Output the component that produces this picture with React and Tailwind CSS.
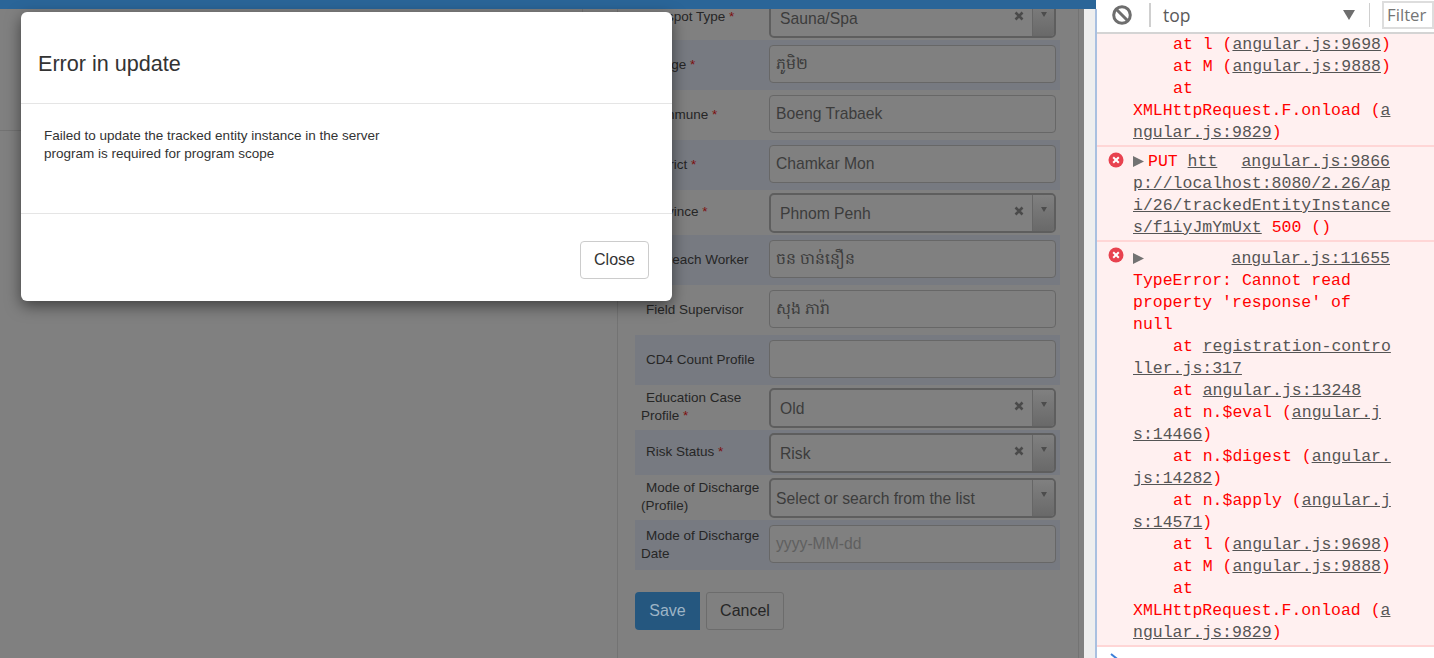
const rows = [
  { label: "Hotspot Type", req: true, h: "h-[45px]", type: "select", value: "Sauna/Spa" },
  { label: "Village", req: true, h: "h-[50px]", dark: true, value: "ភូមិ២" },
  { label: "Commune", req: true, h: "h-[50px]", value: "Boeng Trabaek" },
  { label: "District", req: true, h: "h-[50px]", dark: true, value: "Chamkar Mon" },
  { label: "Province", req: true, h: "h-[45px]", type: "select", value: "Phnom Penh" },
  { label: "Outreach Worker", h: "h-[50px]", dark: true, value: "ចន ចាន់នឿន" },
  { label: "Field Supervisor", h: "h-[50px]", value: "សុង ភារ៉ា" },
  { label: "CD4 Count Profile", h: "h-[50px]", dark: true, value: "" },
  { label: "Education Case Profile", req: true, h: "h-[45px]", type: "select", value: "Old" },
  { label: "Risk Status", req: true, h: "h-[45px]", dark: true, type: "select", value: "Risk" },
  { label: "Mode of Discharge (Profile)", h: "h-[45px]", type: "empty", value: "Select or search from the list" },
  { label: "Mode of Discharge Date", h: "h-[50px]", dark: true, placeholder: "yyyy-MM-dd" },
];

function SelectBox({ value, empty }) {
  return (
    <div className="flex h-[40px] w-[287px] overflow-hidden rounded-[5px] border-[2px] border-[#5e5e5e] bg-[#808080] text-[15.7px] text-[#3c3c3c]">
      <span className={empty ? "flex-1 pl-[5px] pt-[8px] leading-[22px]" : "flex-1 pl-[9px] pt-[8px] leading-[22px]"}>{value}</span>
      {!empty && (
        <svg className="mr-[8px] mt-[11px]" width="10" height="10" viewBox="0 0 10 10">
          <path d="M1.5 1.5l7 7M8.5 1.5l-7 7" stroke="#4a4a4a" strokeWidth="2.6" />
        </svg>
      )}
      <span className="flex w-[22px] justify-center border-l border-[#666666] bg-gradient-to-b from-[#808080] to-[#696969] pt-[11px]">
        <svg width="8" height="7" viewBox="0 0 8 7">
          <polygon points="1,1 7,1 4,6" fill="#4d4d4d" />
        </svg>
      </span>
    </div>
  );
}

function FormRow({ row }) {
  const isSelect = row.type === "select" || row.type === "empty";
  return (
    <div className={`flex items-center ${row.h} ${row.dark ? "bg-[#777a81]" : ""}`}>
      <div className={`w-[134px] pl-[6px] text-[13.5px] leading-[18px] text-[#262626] indent-[5px] ${isSelect ? "mb-[2px]" : ""}`}>
        {row.label}
        {row.req && <span className="text-[#7d0f0f]"> *</span>}
      </div>
      {row.type === "select" && <SelectBox value={row.value} />}
      {row.type === "empty" && <SelectBox value={row.value} empty />}
      {!row.type && (
        <div className="mb-[2px] flex h-[38px] w-[287px] items-center rounded-[4px] border border-[#676767] bg-[#808080] px-[6px] text-[15.7px] text-[#3c3c3c]">
          {row.placeholder ? <span className="text-[#5f5f5f]">{row.placeholder}</span> : row.value}
        </div>
      )}
    </div>
  );
}

function Link({ children }) {
  return <span className="text-[#555555] underline">{children}</span>;
}

function Line({ indent, children }) {
  return (
    <div className={`h-[22px] whitespace-pre ${indent ? "pl-[40px]" : ""}`}>{children}</div>
  );
}

function ErrorIcon() {
  return (
    <svg className="absolute left-[11px] top-[5px]" width="16" height="16" viewBox="0 0 16 16">
      <circle cx="8" cy="8" r="7.5" fill="#e8424f" />
      <path d="M5.2 5.2l5.6 5.6M10.8 5.2l-5.6 5.6" stroke="#ffffff" strokeWidth="2" />
    </svg>
  );
}

function Arrow() {
  return (
    <svg className="mb-[-1px] mr-[4px] inline-block align-baseline" width="11" height="11" viewBox="0 0 11 11">
      <polygon points="0,0 11,5.5 0,11" fill="#727272" />
    </svg>
  );
}

function Console() {
  return (
    <div className="flex w-[337px] flex-col bg-white">
      <div className="flex h-[34px] items-center border-b-[2px] border-[#d4d4d4] pb-[2px] font-['Open_Sans',sans-serif]">
        <svg className="ml-[15px]" width="20" height="20" viewBox="0 0 20 20">
          <circle cx="10" cy="10" r="8.3" fill="none" stroke="#6e6e6e" strokeWidth="3" />
          <path d="M4 4l12 12" stroke="#6e6e6e" strokeWidth="3" />
        </svg>
        <div className="ml-[17px] h-[24px] w-[2px] bg-[#cfcfcf]" />
        <span className="ml-[12px] flex-1 text-[17.5px] text-[#5a5a5a]">top</span>
        <svg width="12" height="10" viewBox="0 0 12 10">
          <polygon points="0,0 12,0 6,10" fill="#6e6e6e" />
        </svg>
        <div className="ml-[14px] h-[24px] w-px bg-[#cfcfcf]" />
        <div className="ml-[12px] flex h-[28px] w-[52px] items-center border-[2px] border-[#dddddd] pl-[3px] text-[16.8px] text-[#757575]">
          Filter
        </div>
      </div>
      <div className="flex flex-1 flex-col overflow-hidden font-['Liberation_Mono',monospace] text-[16.5px] leading-[22px] text-[#ff0000]">
        <div className="border-b-[2px] border-[#ffd6d6] bg-[#fff0f0] pb-[1px] pl-[36px]">
          <Line indent>at l (<Link>angular.js:9698</Link>)</Line>
          <Line indent>at M (<Link>angular.js:9888</Link>)</Line>
          <Line indent>at</Line>
          <Line>XMLHttpRequest.F.onload (<Link>a</Link></Line>
          <Line><Link>ngular.js:9829</Link>)</Line>
        </div>
        <div className="relative border-b-[2px] border-[#ffd6d6] bg-[#fff0f0] pb-[1px] pl-[36px] pt-[4px]">
          <ErrorIcon />
          <div className="flex h-[22px] pr-[44px]">
            <span className="flex-1 whitespace-pre"><Arrow />PUT <Link>htt</Link></span>
            <Link>angular.js:9866</Link>
          </div>
          <Line><Link>p://localhost:8080/2.26/ap</Link></Line>
          <Line><Link>i/26/trackedEntityInstance</Link></Line>
          <Line><Link>s/f1iyJmYmUxt</Link> 500 ()</Line>
        </div>
        <div className="relative border-b-[2px] border-[#ffd6d6] bg-[#fff0f0] pb-[1px] pl-[36px] pt-[6px]">
          <ErrorIcon />
          <div className="flex h-[22px] pr-[44px]">
            <span className="flex-1"><Arrow /></span>
            <Link>angular.js:11655</Link>
          </div>
          <Line>TypeError: Cannot read</Line>
          <Line>property 'response' of</Line>
          <Line>null</Line>
          <Line indent>at <Link>registration-contro</Link></Line>
          <Line><Link>ller.js:317</Link></Line>
          <Line indent>at <Link>angular.js:13248</Link></Line>
          <Line indent>at n.$eval (<Link>angular.j</Link></Line>
          <Line><Link>s:14466</Link>)</Line>
          <Line indent>at n.$digest (<Link>angular.</Link></Line>
          <Line><Link>js:14282</Link>)</Line>
          <Line indent>at n.$apply (<Link>angular.j</Link></Line>
          <Line><Link>s:14571</Link>)</Line>
          <Line indent>at l (<Link>angular.js:9698</Link>)</Line>
          <Line indent>at M (<Link>angular.js:9888</Link>)</Line>
          <Line indent>at</Line>
          <Line>XMLHttpRequest.F.onload (<Link>a</Link></Line>
          <Line><Link>ngular.js:9829</Link>)</Line>
        </div>
        <div className="pl-[11px] pt-[5px]">
          <svg width="12" height="12" viewBox="0 0 12 12">
            <path d="M3 2l5 4-5 4" fill="none" stroke="#3b7fd9" strokeWidth="2" />
          </svg>
        </div>
      </div>
    </div>
  );
}

function Modal() {
  return (
    <div className="absolute left-[21px] top-[12px] flex h-[289px] w-[651px] flex-col rounded-[6px] bg-white text-[#333333] shadow-[0_5px_15px_rgba(0,0,0,0.5)]">
      <div className="flex h-[92px] items-center border-b border-[#e5e5e5] pl-[17px] pt-[13px] text-[21.6px]">
        Error in update
      </div>
      <div className="h-[110px] border-b border-[#e5e5e5] pl-[23px] pt-[23px] text-[13.5px] leading-[18px]">
        <div>Failed to update the tracked entity instance in the server</div>
        <div>program is required for program scope</div>
      </div>
      <div className="flex justify-end pr-[23px] pt-[27px]">
        <button className="h-[38px] w-[69px] rounded-[4px] border border-[#cccccc] bg-white text-[16px] text-[#333333]">
          Close
        </button>
      </div>
    </div>
  );
}

export default function App() {
  return (
    <div className="relative flex h-[658px] w-[1434px] overflow-hidden font-['Liberation_Sans','Noto_Sans',sans-serif]">
      <div className="flex w-[1097px] flex-col">
        <div className="h-[9px] w-[1096px] bg-[#2a6598]" />
        <div className="flex flex-1 overflow-hidden">
          <div className="flex w-[1084px] bg-[#808080]">
            <div className="w-[618px] border-r border-[#737373]">
              <div className="h-[122px] border-b border-[#737373]">
                <div className="h-full w-[583px] border-r border-[#737373]" />
              </div>
            </div>
            <div className="w-[461px] border-r border-[#737373]">
              <div className="-mt-[14px] w-[442px] pl-[17px]">
                {rows.map((r) => (
                  <FormRow key={r.label} row={r} />
                ))}
                <div className="mt-[22px] flex gap-[6px] text-[16px]">
                  <button className="h-[38px] w-[65px] rounded-l-[4px] bg-[#25577f] text-[#9db4c6]">Save</button>
                  <button className="h-[38px] w-[78px] rounded-[3px] border border-[#6c6c6c] text-[#262626]">Cancel</button>
                </div>
              </div>
            </div>
          </div>
          <div className="flex-1 bg-[#eeeeee]" />
          <div className="w-[2px] bg-[#a9c0e0]" />
        </div>
      </div>
      <Console />
      <Modal />
    </div>
  );
}
